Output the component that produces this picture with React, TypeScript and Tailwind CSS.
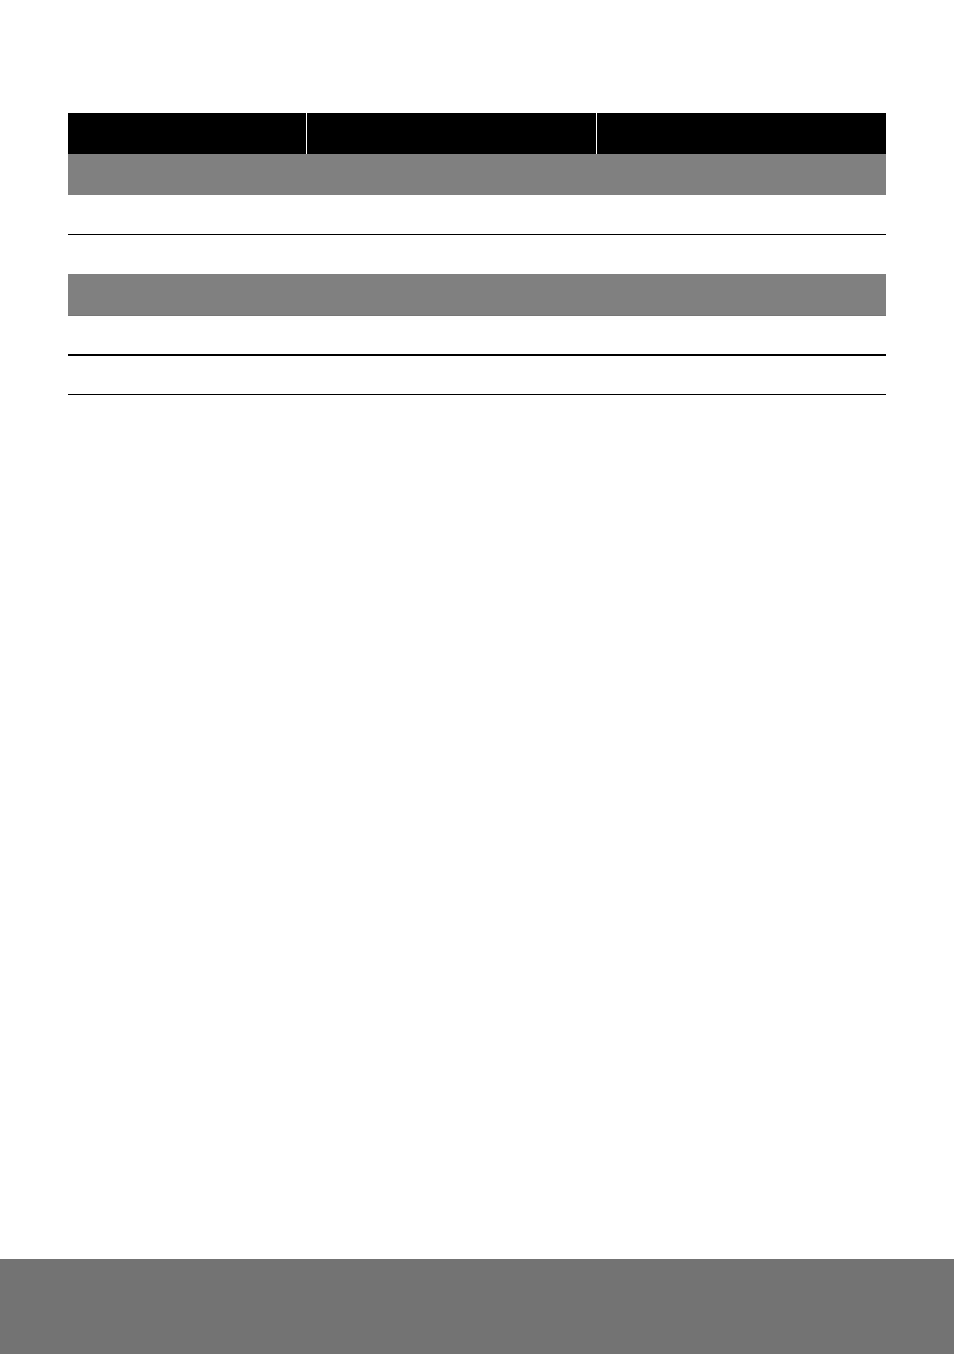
const App = () => {
  return (
    <div className="min-h-[1354px] flex flex-col bg-white font-['Liberation_Sans',sans-serif]">
      <div className="pt-[113px] px-[68px]">
        {/* Header */}
        <div className="flex h-[41px] bg-black">
          <div className="w-[238px]"></div>
          <div className="w-[290px] border-l border-white"></div>
          <div className="flex-1 border-l border-white"></div>
        </div>
        {/* Section 1 */}
        <div className="h-[41px] bg-[#808080]"></div>
        <div className="h-[40px] border-b border-black"></div>
        <div className="h-[39px]"></div>
        {/* Section 2 */}
        <div className="h-[42px] bg-[#808080] border-b border-[#767676]"></div>
        <div className="h-[40px] border-b-2 border-black"></div>
        <div className="h-[39px] border-b border-black"></div>
      </div>
      {/* Footer band */}
      <div className="mt-auto h-[95px] bg-[#737373]"></div>
    </div>
  );
};

export default App;
